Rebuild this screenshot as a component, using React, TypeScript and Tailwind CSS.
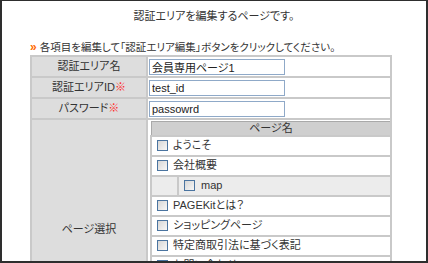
const PAGES = [
  { name: 'ようこそ' },
  { name: '会社概要' },
  { name: 'map', child: true },
  { name: 'PAGEKitとは？' },
  { name: 'ショッピングページ' },
  { name: '特定商取引法に基づく表記' },
  { name: 'お問い合わせ' },
  { name: 'サイトマップ' },
  { name: '会員専用ページ1' },
  { name: 'プライバシーポリシー' },
]

function Box() {
  return (
    <span className="inline-block w-[11px] h-[11px] shrink-0 border border-[#4a74a0] bg-linear-to-br from-[#d6d6d6] to-[#f7f7f7]" />
  )
}

function Mark() {
  return <span className="text-[#ff2a2a]">※</span>
}

export default function App() {
  const cell = 'border-2 border-[#c9c9c9]'
  const label = `${cell} bg-[#dddddd] font-normal text-center align-middle p-0`
  const input =
    'block w-[136px] h-[16px] border border-[#8fa9c8] bg-white px-[2px] text-[11px] leading-[14px] text-[#222] outline-none'

  return (
    <div className="w-[428px] h-[263px] overflow-hidden bg-white border-t border-l-2 border-r-2 border-b-2 border-[#2e2e2e] text-[11px] text-[#333] font-['Liberation_Sans','Noto_Sans_CJK_JP',sans-serif] [font-feature-settings:'palt']">
      <p className="pt-[7px] leading-[16px] text-center">認証エリアを編集するページです。</p>

      <div className="pl-[28px] mt-[15px]">
        <p className="leading-[16px] flex items-center text-[10.5px]">
          <span className="text-[#ff6a00] font-bold text-[12px] mr-[3px]">»</span>
          各項目を編集して「認証エリア編集」ボタンをクリックしてください。
        </p>

        <table className="border-collapse table-fixed w-[362px]">
          <tbody>
            <tr className="h-[21px]">
              <th className={`${label} w-[116px]`}>認証エリア名</th>
              <td className={`${cell} bg-white p-0 pl-px`}>
                <input className={input} defaultValue="会員専用ページ1" />
              </td>
            </tr>
            <tr className="h-[21px]">
              <th className={label}>
                認証エリアID<Mark />
              </th>
              <td className={`${cell} bg-white p-0 pl-px`}>
                <input className={input} defaultValue="test_id" />
              </td>
            </tr>
            <tr className="h-[21px]">
              <th className={label}>
                パスワード<Mark />
              </th>
              <td className={`${cell} bg-white p-0 pl-px`}>
                <input className={input} defaultValue="passowrd" />
              </td>
            </tr>
            <tr>
              <th className={label}>ページ選択</th>
              <td className={`${cell} bg-white pl-[2px] pt-px pr-0 pb-px align-top`}>
                <table className="border-collapse w-[242px]">
                  <thead>
                    <tr className="h-[14px]">
                      <th
                        colSpan={2}
                        className="border border-[#a9a9a9] bg-[#cfcfcf] font-normal text-center leading-[12px] p-0"
                      >
                        ページ名
                      </th>
                    </tr>
                  </thead>
                  <tbody>
                    {PAGES.map(p =>
                      p.child ? (
                        <tr key={p.name} className="h-[20px] bg-[#ececec]">
                          <td className="w-[27px] border-2 border-[#c9c9c9] p-0" />
                          <td className="border-2 border-[#c9c9c9] px-[5px] py-0">
                            <div className="flex items-center gap-[6px]">
                              <Box />
                              {p.name}
                            </div>
                          </td>
                        </tr>
                      ) : (
                        <tr key={p.name} className="h-[20px] bg-white">
                          <td colSpan={2} className="border-2 border-[#c9c9c9] px-[5px] py-0">
                            <div className="flex items-center gap-[5px]">
                              <Box />
                              {p.name}
                            </div>
                          </td>
                        </tr>
                      )
                    )}
                  </tbody>
                </table>
              </td>
            </tr>
          </tbody>
        </table>
      </div>
    </div>
  )
}
